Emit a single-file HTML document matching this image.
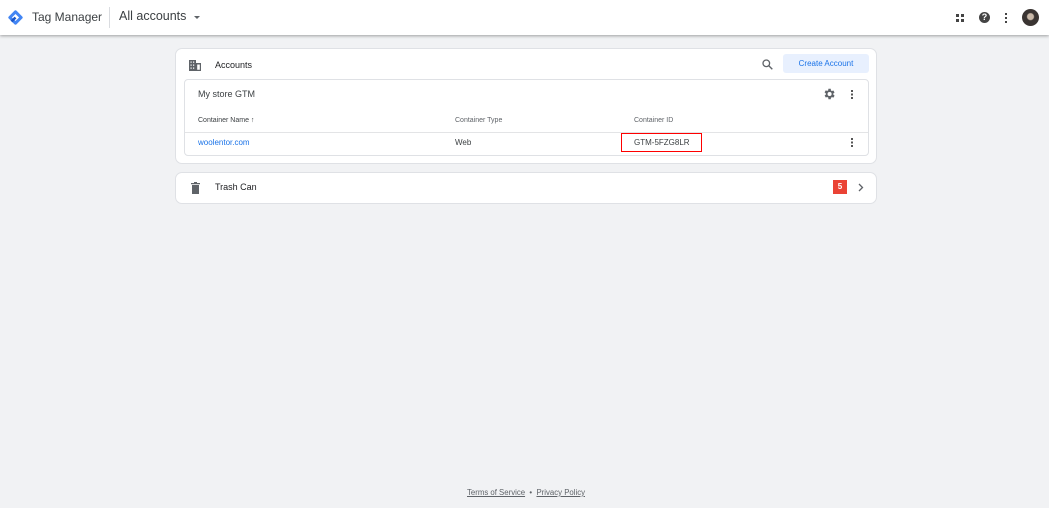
<!DOCTYPE html>
<html><head><style>
*{margin:0;padding:0;box-sizing:border-box}
body{width:1049px;height:508px;background:#f1f2f4;font-family:"Liberation Sans",sans-serif;position:relative;overflow:hidden;color:#202124}
.hdr{position:absolute;left:0;top:0;width:1049px;height:35px;background:#fff;box-shadow:0 1px 3px rgba(0,0,0,.35)}
.abs{position:absolute}
.card{position:absolute;background:#fff;border:1px solid #dfe1e5;border-radius:7px}
.sm{font-size:7px;color:#5f6368}
</style></head><body>
<div class="hdr">
 <svg class="abs" style="left:7px;top:9px" width="17" height="17" viewBox="0 0 17 17"><rect x="3" y="3" width="11" height="11" transform="rotate(45 8.5 8.5)" fill="#4285f4" rx="1.5"/><rect x="6" y="6" width="5" height="5" transform="rotate(45 8.5 8.5)" fill="#fff"/><path d="M8.5 8.5 L4.5 12.5" stroke="#1a56c9" stroke-width="2.6"/></svg>
 <div class="abs" style="left:32px;top:10px;font-size:12px;color:#3c4043">Tag Manager</div>
 <div class="abs" style="left:109px;top:7px;width:1px;height:21px;background:#dadce0"></div>
 <div class="abs" style="left:119px;top:9px;font-size:12.5px;color:#3c4043">All accounts</div>
 <div class="abs" style="left:194px;top:16px;border-left:3px solid transparent;border-right:3px solid transparent;border-top:3px solid #5f6368"></div>
 <div class="abs" style="left:956px;top:14px;width:8px;height:8px;background:linear-gradient(90deg,#444 3px,transparent 3px,transparent 5px,#444 5px);-webkit-mask:linear-gradient(#000 3px,transparent 3px,transparent 5px,#000 5px)"></div>
 <div class="abs" style="left:979px;top:12px;width:11px;height:11px;border-radius:50%;background:#444;color:#fff;font-size:9px;font-weight:bold;text-align:center;line-height:11px">?</div>
 <div class="abs" style="left:1005px;top:13px;width:2px;height:10px;background:linear-gradient(#444 2px,transparent 2px,transparent 4px,#444 4px,#444 6px,transparent 6px,transparent 8px,#444 8px)"></div>
 <div class="abs" style="left:1022px;top:9px;width:17px;height:17px;border-radius:50%;background:radial-gradient(circle at 50% 45%,#c9b8a8 0 3px,#3a3432 4px)"></div>
</div>
<div class="card" style="left:175px;top:48px;width:702px;height:116px">
 <svg class="abs" style="left:13px;top:11px" width="12" height="11" viewBox="0 0 12 11"><path d="M0 0h7v11H0z M7 3h5v8H7z" fill="#5f6368"/><path d="M1.5 1.5h1.2v1.2H1.5zM4 1.5h1.2v1.2H4zM1.5 4.5h1.2v1.2H1.5zM4 4.5h1.2v1.2H4zM1.5 7.5h1.2v1.2H1.5zM4 7.5h1.2v1.2H4zM8.2 4.5h2.6v5.3H8.2z" fill="#fff"/></svg>
 <div class="abs" style="left:39px;top:11px;font-size:9px">Accounts</div>
 <svg class="abs" style="left:586px;top:10px" width="11" height="11" viewBox="0 0 11 11"><circle cx="4.3" cy="4.3" r="3.3" stroke="#5f6368" stroke-width="1.3" fill="none"/><path d="M6.8 6.8L10.3 10.3" stroke="#5f6368" stroke-width="1.4"/></svg>
 <div class="abs" style="left:607px;top:5px;width:86px;height:19px;background:#e8f0fe;border-radius:3px;color:#1a73e8;font-size:8px;text-align:center;line-height:19px">Create Account</div>
 <div class="card" style="left:8px;top:30px;width:685px;height:77px;border-radius:4px">
  <div class="abs" style="left:13px;top:9px;font-size:9px;color:#3c4043">My store GTM</div>
  <svg class="abs" style="left:637px;top:7px" width="14" height="14" viewBox="0 0 24 24"><path fill="#5f6368" d="M19.4 13a7.5 7.5 0 000-2l2.1-1.6-2-3.5-2.5 1a7.5 7.5 0 00-1.7-1L15 3h-4l-.4 2.7a7.5 7.5 0 00-1.7 1l-2.5-1-2 3.5L6.6 11a7.5 7.5 0 000 2l-2.1 1.6 2 3.5 2.5-1a7.5 7.5 0 001.7 1L11 21h4l.4-2.7a7.5 7.5 0 001.7-1l2.5 1 2-3.5zM13 15.5a3.5 3.5 0 110-7 3.5 3.5 0 010 7z"/></svg>
  <div class="abs" style="left:666px;top:10px;width:2px;height:9px;background:linear-gradient(#555 2px,transparent 2px,transparent 3.5px,#555 3.5px,#555 5.5px,transparent 5.5px,transparent 7px,#555 7px)"></div>
  <div class="abs" style="left:13px;top:37px;font-size:7px;color:#3c4043">Container Name &#8593;</div>
  <div class="abs sm" style="left:270px;top:37px">Container Type</div>
  <div class="abs sm" style="left:449px;top:37px">Container ID</div>
  <div class="abs" style="left:0;top:52px;width:683px;height:1px;background:#e3e4e6"></div>
  <div class="abs" style="left:13px;top:58px;font-size:8px;color:#1a73e8">woolentor.com</div>
  <div class="abs" style="left:270px;top:58px;font-size:8px;color:#3c4043">Web</div>
  <div class="abs" style="left:436px;top:53px;width:81px;height:19px;border:1px solid #ff0000;"></div>
  <div class="abs" style="left:449px;top:58px;font-size:8px;color:#3c4043">GTM-5FZG8LR</div>
  <div class="abs" style="left:666px;top:58px;width:2px;height:9px;background:linear-gradient(#555 2px,transparent 2px,transparent 3.5px,#555 3.5px,#555 5.5px,transparent 5.5px,transparent 7px,#555 7px)"></div>
 </div>
</div>
<div class="card" style="left:175px;top:172px;width:702px;height:32px">
 <svg class="abs" style="left:15px;top:9px" width="9" height="12" viewBox="0 0 9 12"><path d="M0 1h9v1.3H0zM3 0h3v1H3zM1 3h7v9H1z" fill="#5f6368"/></svg>
 <div class="abs" style="left:39px;top:9px;font-size:9px">Trash Can</div>
 <div class="abs" style="left:657px;top:7px;width:14px;height:14px;background:#ea4335;color:#fff;font-size:8px;font-weight:bold;text-align:center;line-height:14px">5</div>
 <svg class="abs" style="left:682px;top:10px" width="6" height="9" viewBox="0 0 6 9"><path d="M1 1l3.5 3.5L1 8" stroke="#5f6368" stroke-width="1.3" fill="none"/></svg>
</div>
<div class="abs" style="left:467px;top:488px;font-size:7.8px;color:#5f6368"><span style="text-decoration:underline">Terms of Service</span> &nbsp;•&nbsp; <span style="text-decoration:underline">Privacy Policy</span></div>
</body></html>
